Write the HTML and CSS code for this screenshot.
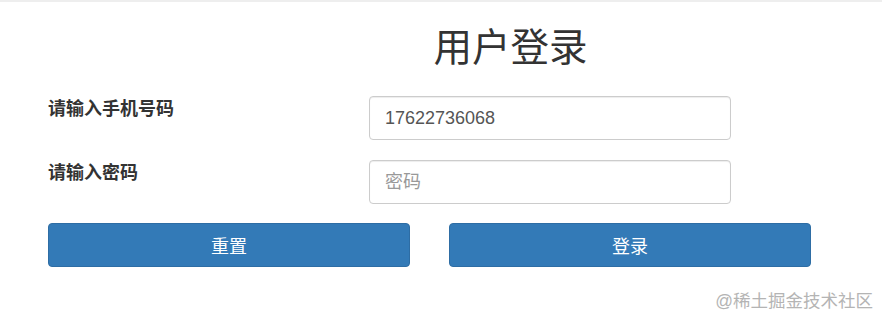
FILE: index.html
```html
<!DOCTYPE html>
<html lang="zh-CN">
<head>
<meta charset="utf-8">
<title>用户登录</title>
<link rel="stylesheet" href="styles.css">
</head>
<body>
<div class="topline"></div>
<div class="container">
  <h1 class="title">用户登录</h1>
  <form class="form">
    <div class="row">
      <label class="label">请输入手机号码</label>
      <input class="input" type="text" value="17622736068">
    </div>
    <div class="row">
      <label class="label">请输入密码</label>
      <input class="input" type="password" placeholder="密码">
    </div>
    <div class="buttons">
      <button type="button" class="btn">重置</button>
      <button type="button" class="btn">登录</button>
    </div>
  </form>
</div>
<div class="watermark">@稀土掘金技术社区</div>
</body>
</html>
```
FILE: styles.css
```css
html, body {
  margin: 0;
  padding: 0;
  background: #fff;
}
body {
  font-family: "Liberation Sans", "Noto Sans CJK SC", sans-serif;
  color: #333;
  width: 882px;
  height: 321px;
  overflow: hidden;
  position: relative;
}
.topline {
  height: 2px;
  background: #eeeeee;
}
.container {
  width: 764px;
  margin-left: 48px;
}
.title {
  margin: 24px 0 0 0;
  padding-left: 161px;
  text-align: center;
  font-size: 38.5px;
  line-height: 44px;
  font-weight: normal;
  color: #333;
}
.form {
  margin-top: 26px;
  display: flex;
  flex-direction: column;
  gap: 20px;
}
.row {
  display: flex;
  align-items: flex-start;
}
.label {
  width: 321px;
  font-size: 18px;
  font-weight: bold;
  line-height: 26px;
  color: #333;
}
.input {
  box-sizing: border-box;
  width: 362px;
  height: 44px;
  margin: 0;
  padding: 0 15px;
  border: 1px solid #ccc;
  border-radius: 4px;
  box-shadow: inset 0 1px 1px rgba(0,0,0,.075);
  font-family: "Liberation Sans", "Noto Sans CJK SC", sans-serif;
  font-size: 18px;
  color: #555;
  background: #fff;
  outline: none;
}
.input::placeholder {
  color: #999;
}
.buttons {
  display: flex;
  gap: 39px;
  margin-top: -1px;
}
.btn {
  box-sizing: border-box;
  width: 362px;
  height: 44px;
  margin: 0;
  padding: 0;
  border: 1px solid #2e6da4;
  border-radius: 4px;
  background: #337ab7;
  color: #fff;
  font-family: "Liberation Sans", "Noto Sans CJK SC", sans-serif;
  font-size: 18px;
  cursor: pointer;
}
.watermark {
  position: absolute;
  right: 9px;
  top: 288px;
  font-size: 17.5px;
  line-height: 26px;
  color: #b4b4b4;
  font-family: "Liberation Sans", "Noto Sans CJK SC", sans-serif;
}
```
